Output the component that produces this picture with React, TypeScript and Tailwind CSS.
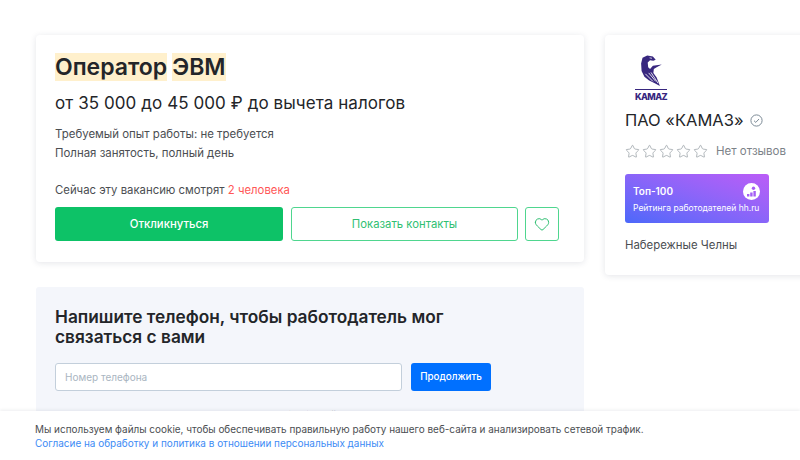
import { Heart, Star } from "lucide-react";

function KamazLogo() {
  return (
    <div className="flex w-[32px] flex-col items-center">
      <svg width="24" height="32" viewBox="0 0 24 34" className="text-[#38277f]">
        <path
          d="M3 3 L8 0.5 L14 1.5 L17 5 L14.5 6 L11 5.5 L8.5 8 L9 13 L11 15 L14 11.5 L23.5 10 L18 13 L15 15 L14.5 19 L18 24 L21.5 33 L16 30 L10 27 L5 23 L2 17 L1.5 9 Z"
          fill="currentColor"
        />
        <path d="M6 20 L14 28 M9.5 19 L17 28 M12 18.5 L19.5 30" stroke="#fff" strokeWidth="0.9" fill="none" />
        <path d="M10.5 3 L13 3.5" stroke="#fff" strokeWidth="0.8" />
      </svg>
      <div className="mt-[2px] h-[1px] w-[32px] bg-[#38277f]" />
      <div className="mt-[2px] text-[9px] leading-[10px] font-extrabold tracking-[-0.6px] text-[#38277f]">KAMAZ</div>
    </div>
  );
}

function VerifiedIcon() {
  return (
    <svg width="13" height="13" viewBox="0 0 13 13" fill="none" className="text-[#7c8a96]">
      <circle cx="6.5" cy="6.5" r="5.6" stroke="currentColor" strokeWidth="1" />
      <path d="M4 6.7 L5.8 8.4 L9 5" stroke="currentColor" strokeWidth="1" />
    </svg>
  );
}

function RatingIcon() {
  return (
    <div className="flex size-[17px] items-center justify-center rounded-full bg-white">
      <svg width="11" height="11" viewBox="0 0 11 11" className="text-[#a45df5]">
        <circle cx="7.5" cy="2.2" r="1.7" fill="currentColor" />
        <rect x="1" y="8" width="2.4" height="2.5" fill="currentColor" />
        <rect x="4.2" y="6.5" width="2.4" height="4" fill="currentColor" />
        <rect x="7.4" y="5" width="2.4" height="5.5" fill="currentColor" />
      </svg>
    </div>
  );
}

export default function App() {
  return (
    <div className="relative h-[460px] w-[800px] overflow-hidden bg-white font-['Inter',sans-serif] text-[#232529]">
      <div className="flex items-start gap-[21px] pt-[35px] pl-[36px]">
        <div className="flex w-[548px] shrink-0 flex-col gap-[25px]">
          {/* Vacancy card */}
          <div className="h-[227px] rounded-[4px] bg-white px-[19px] pt-[18px] shadow-[0_1px_6px_rgba(30,40,70,0.12)]">
            <h1 className="flex gap-[5px] text-[23px] leading-[28px] font-semibold">
              <span className="bg-[#fff0cc]">Оператор</span>
              <span className="bg-[#fff0cc]">ЭВМ</span>
            </h1>
            <p className="mt-[9px] text-[17px] leading-[26px] tracking-[0.08px]">от 35 000 до 45 000 ₽ до вычета налогов</p>
            <div className="mt-[9px] text-[11.45px] leading-[19px] text-[#4b4e52]">
              <p>Требуемый опыт работы: не требуется</p>
              <p>Полная занятость, полный день</p>
            </div>
            <p className="mt-[18px] text-[11.35px] leading-[19px] text-[#4b4e52]">
              Сейчас эту вакансию смотрят <span className="text-[#ff5757]">2 человека</span>
            </p>
            <div className="mt-[7px] flex">
              <button className="h-[34px] w-[228px] rounded-[3px] bg-[#0dc267] text-[11.3px] font-medium text-white">
                Откликнуться
              </button>
              <button className="ml-[8px] h-[34px] w-[227px] rounded-[3px] border border-[#4fd68f] text-[11.3px] text-[#2fbf72]">
                Показать контакты
              </button>
              <button className="ml-[7px] flex h-[34px] w-[34px] items-center justify-center rounded-[3px] border border-[#4fd68f] text-[#2fbf72]">
                <Heart size={16} strokeWidth={1.5} />
              </button>
            </div>
          </div>

          {/* Phone form */}
          <div className="h-[200px] rounded-[3px] bg-[#f4f6fb] px-[19px] pt-[20px]">
            <h2 className="w-[420px] text-[17.3px] leading-[20px] font-semibold">
              Напишите телефон, чтобы работодатель мог связаться с вами
            </h2>
            <div className="mt-[16px] flex gap-[9px]">
              <input
                placeholder="Номер телефона"
                className="h-[28px] w-[347px] rounded-[3px] border border-[#c3cfdb] bg-white px-[9px] text-[10px] placeholder:text-[#a9b5c1]"
              />
              <button className="h-[28px] w-[80px] rounded-[3px] bg-[#0070ff] text-[9.8px] font-medium text-white">
                Продолжить
              </button>
            </div>
            <p className="mt-[17px] text-[10px] leading-[14px] whitespace-nowrap text-[#4b4e52]">
              Нажимая «Продолжить», вы соглашаетесь с обработкой данных и принимаете{" "}
              <span className="text-[#3d8bf5]">Условия</span>
            </p>
          </div>
        </div>

        {/* Company card */}
        <div className="h-[240px] w-[220px] shrink-0 rounded-[4px] bg-white pt-[20px] pl-[20px] shadow-[0_1px_6px_rgba(30,40,70,0.12)]">
          <div className="pl-[10px]">
            <KamazLogo />
          </div>
          <div className="mt-[6px] flex items-center gap-[6px] text-[16.5px] leading-[24px]">
            ПАО «КАМАЗ» <VerifiedIcon />
          </div>
          <div className="mt-[11px] flex items-center">
            <div className="flex gap-[2px] text-[#8f979e]">
              <Star size={15} strokeWidth={1.1} />
              <Star size={15} strokeWidth={1.1} />
              <Star size={15} strokeWidth={1.1} />
              <Star size={15} strokeWidth={1.1} />
              <Star size={15} strokeWidth={1.1} />
            </div>
            <span className="ml-[8px] text-[11.5px] text-[#7c8288]">Нет отзывов</span>
          </div>
          <div className="mt-[14px] flex h-[49px] w-[144px] flex-col rounded-[3px] bg-gradient-to-tr from-[#4a68fa] to-[#bb5cf7] pt-[9px] pl-[8px] text-white">
            <div className="flex items-center justify-between pr-[9px]">
              <span className="text-[10px] font-semibold">Топ-100</span>
              <RatingIcon />
            </div>
            <span className="mt-[2px] text-[8.5px] leading-[12px] whitespace-nowrap">Рейтинга работодателей hh.ru</span>
          </div>
          <p className="mt-[13px] text-[11.4px] leading-[19px] text-[#4b4e52]">Набережные Челны</p>
        </div>
      </div>

      {/* Cookie banner */}
      <div className="absolute right-0 bottom-0 left-0 h-[49px] bg-white pt-[11px] pl-[35px] text-[9.95px] leading-[14px] shadow-[0_-1px_3px_rgba(30,40,70,0.08)]">
        <p className="text-[#4b4e52]">
          Мы используем файлы cookie, чтобы обеспечивать правильную работу нашего веб-сайта и анализировать сетевой трафик.
        </p>
        <p className="text-[#3d8bf5]">Согласие на обработку и политика в отношении персональных данных</p>
      </div>
    </div>
  );
}
